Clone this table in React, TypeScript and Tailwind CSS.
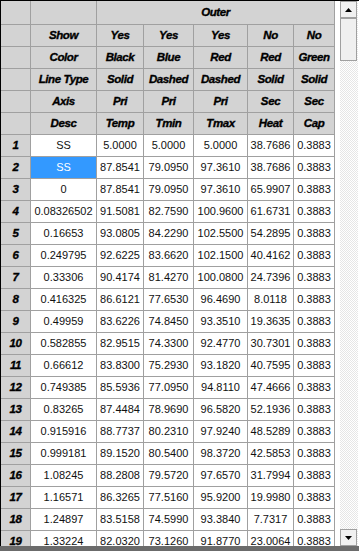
import React from "react";

const dataRows: string[][] = [
  ["SS", "5.0000", "5.0000", "5.0000", "38.7686", "0.3883"],
  ["SS", "87.8541", "79.0950", "97.3610", "38.7686", "0.3883"],
  ["0", "87.8541", "79.0950", "97.3610", "65.9907", "0.3883"],
  ["0.08326502", "91.5081", "82.7590", "100.9600", "61.6731", "0.3883"],
  ["0.16653", "93.0805", "84.2290", "102.5500", "54.2895", "0.3883"],
  ["0.249795", "92.6225", "83.6620", "102.1500", "40.4162", "0.3883"],
  ["0.33306", "90.4174", "81.4270", "100.0800", "24.7396", "0.3883"],
  ["0.416325", "86.6121", "77.6530", "96.4690", "8.0118", "0.3883"],
  ["0.49959", "83.6226", "74.8450", "93.3510", "19.3635", "0.3883"],
  ["0.582855", "82.9515", "74.3300", "92.4770", "30.7301", "0.3883"],
  ["0.66612", "83.8300", "75.2930", "93.1820", "40.7595", "0.3883"],
  ["0.749385", "85.5936", "77.0950", "94.8110", "47.4666", "0.3883"],
  ["0.83265", "87.4484", "78.9690", "96.5820", "52.1936", "0.3883"],
  ["0.915916", "88.7737", "80.2310", "97.9240", "48.5289", "0.3883"],
  ["0.999181", "89.1520", "80.5400", "98.3720", "42.5853", "0.3883"],
  ["1.08245", "88.2808", "79.5720", "97.6570", "31.7994", "0.3883"],
  ["1.16571", "86.3265", "77.5160", "95.9200", "19.9980", "0.3883"],
  ["1.24897", "83.5158", "74.5990", "93.3840", "7.7317", "0.3883"],
  ["1.33224", "82.0320", "73.1260", "91.8770", "23.0064", "0.3883"],
];

const headerRows: string[][] = [
  ["Show", "Yes", "Yes", "Yes", "No", "No"],
  ["Color", "Black", "Blue", "Red", "Red", "Green"],
  ["Line Type", "Solid", "Dashed", "Dashed", "Solid", "Solid"],
  ["Axis", "Pri", "Pri", "Pri", "Sec", "Sec"],
  ["Desc", "Temp", "Tmin", "Tmax", "Heat", "Cap"],
];

// bold italic header text, squeezed and heavy like the old grid font
const hdr =
  "bg-[#d3d3d3] flex items-center justify-center font-['Liberation_Sans_Narrow','Liberation_Sans',Arial,sans-serif] font-bold italic text-[11.5px] tracking-[-0.4px] [-webkit-text-stroke:0.35px_#000] text-black whitespace-nowrap overflow-hidden";

const cell =
  "bg-white flex items-center justify-center font-['Liberation_Sans',Arial,sans-serif] text-[11px] text-[#111] whitespace-nowrap overflow-hidden";

const Arrow = ({ up }: { up: boolean }) => (
  <div className="h-[17px] w-[17px] bg-[#f0f0f0] border border-[#a0a0a0] flex items-center justify-center">
    <svg width="7" height="4" viewBox="0 0 7 4">
      {up ? <path d="M0 4 L3.5 0 L7 4 Z" fill="#000" /> : <path d="M0 0 L3.5 4 L7 0 Z" fill="#000" />}
    </svg>
  </div>
);

const App = () => {
  return (
    <div className="w-[359px] h-[551px] bg-[#6b6b6b] overflow-hidden">
      <div className="flex h-[546px] border-t border-l border-black bg-white">
        {/* the grid itself */}
        <div className="w-[339px] h-full overflow-hidden">
          <div className="grid grid-cols-[29px_65px_46px_49px_53px_45px_40px] grid-rows-[23px] auto-rows-[21px] gap-px bg-[#a0a0a0] w-[334px] pr-px pb-px">
            <div className={hdr}></div>
            <div className={hdr}></div>
            <div className={hdr + " col-span-5"}>Outer</div>

            {headerRows.map((r, i) => (
              <React.Fragment key={"h" + i}>
                <div className={hdr}></div>
                {r.map((t, j) => (
                  <div key={j} className={hdr}>
                    {t}
                  </div>
                ))}
              </React.Fragment>
            ))}

            {dataRows.map((r, i) => (
              <React.Fragment key={"d" + i}>
                <div className={hdr}>{i + 1}</div>
                {r.map((t, j) =>
                  i === 1 && j === 0 ? (
                    <div key={j} className={cell + " !bg-[#3399ff] !text-white"}>
                      {t}
                    </div>
                  ) : (
                    <div key={j} className={cell}>
                      {t}
                    </div>
                  )
                )}
              </React.Fragment>
            ))}
          </div>
        </div>

        {/* vertical scrollbar */}
        <div className="w-[18px] h-full flex flex-col bg-[repeating-conic-gradient(#e6e6e6_0_25%,#ffffff_0_50%)] bg-[length:2px_2px]">
          <Arrow up />
          <div className="h-[43px] w-[17px] bg-[#f0f0f0] border border-[#a0a0a0]" />
          <div className="flex-1" />
          <Arrow up={false} />
        </div>
      </div>
    </div>
  );
};

export default App;
